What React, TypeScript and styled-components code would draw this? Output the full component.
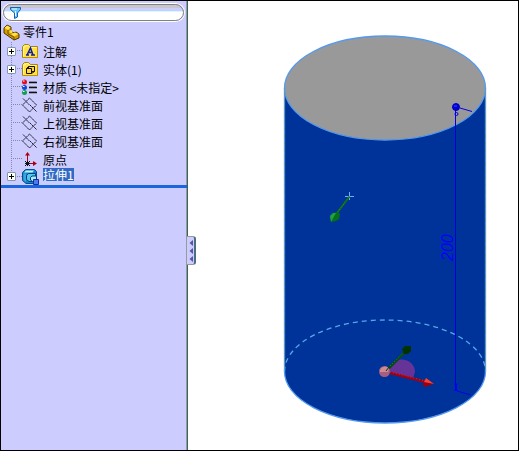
import React, { useState } from 'react';
import styled, { createGlobalStyle } from 'styled-components';

const GlobalStyle = createGlobalStyle`
  *, *::before, *::after { box-sizing: border-box; }
  body { margin: 0; background: #fff; }
  button, input { font: inherit; }
`;

const Frame = styled.main`
  display: flex;
  min-height: 100vh;
  border: 1px solid #000;
  background: #fff;
  color: #000;
  font: 12px/18px 'Noto Sans CJK SC', sans-serif;
`;

const Sidebar = styled.aside`
  position: relative;
  flex: 0 0 187px;
  background: #ccccff;
  border-right: 1px solid #336666;
  box-shadow: inset -1px 0 #999999;
`;

const FilterBar = styled.label`
  display: flex;
  align-items: center;
  gap: 4px;
  height: 17px;
  margin: 3px 3px 1px 2px;
  padding: 0 6px;
  border: 1px solid #808080;
  border-radius: 9px;
  box-shadow: 0 0 0 1px #fff;
  background: linear-gradient(#c8c8cc 3px, #ccccff 3px 6px, #ccffff 6px 7px, #fff 7px);
`;

const FilterInput = styled.input`
  flex: 1;
  min-width: 0;
  height: 14px;
  padding: 0;
  border: 0;
  outline: 0;
  background: transparent;
  font-size: 12px;
`;

const Root = styled.div`
  display: flex;
  align-items: center;
  gap: 3px;
  height: 20px;
  padding-left: 2px;
`;

const Tree = styled.ul`
  list-style: none;
  margin: 0;
  padding: 0 1px 0 0;
  border-bottom: 3px solid #1a66dd;
`;

const Row = styled.li`
  display: flex;
  align-items: center;
  height: 18px;

  &:last-child {
    height: 17px;
    align-items: flex-end;
  }
`;

const Branch = styled.span<{ $last: boolean }>`
  display: flex;
  align-items: center;
  align-self: stretch;
  width: 11px;
  margin-left: 10px;
  background-image:
    repeating-linear-gradient(#8888a0 0 1px, transparent 1px 2px),
    repeating-linear-gradient(90deg, #8888a0 0 1px, transparent 1px 2px);
  background-repeat: no-repeat;
  background-size: 1px ${(p) => (p.$last ? '50%' : '100%')}, 100% 1px;
  background-position: 0 0, 0 8px;
`;

const Toggle = styled.button`
  display: flex;
  flex: none;
  width: 9px;
  height: 9px;
  margin-left: -4px;
  padding: 0;
  border: 1px solid #7f99b5;
  border-radius: 1px;
  background: #fffff4;
`;

const Label = styled.span<{ $selected?: boolean }>`
  margin-left: 4px;
  line-height: 13px;
  white-space: nowrap;
  color: ${(p) => (p.$selected ? '#fff' : '#000')};
  background: ${(p) => (p.$selected ? '#316ac5' : 'transparent')};
  align-self: ${(p) => (p.$selected ? 'flex-start' : 'center')};
`;

const Icon = styled.svg`
  display: block;
  flex: none;
`;

const Collapse = styled.button`
  position: absolute;
  top: 235px;
  right: -9px;
  display: flex;
  width: 9px;
  height: 29px;
  padding: 0;
  border: 1px solid #999;
  border-left: 0;
  border-right: 2px solid #4a7080;
  border-radius: 0 3px 3px 0;
  background: #ccccff;
`;

const Viewport = styled.section`
  flex: 1;
  min-width: 0;
  display: flex;
`;

const Scene = styled.svg`
  display: block;
  width: 100%;
  height: calc(100vh - 2px);
`;

const Dimension = styled.text`
  font: italic 16px 'Liberation Sans', sans-serif;
  fill: #0000ff;
`;

type Kind = 'note' | 'body' | 'material' | 'plane' | 'origin' | 'extrude';

const Folder = () => (
  <>
    <path d="M.5 14.500V3.500L2.500 1.500H6.500L8.500 3.500H15.500V14.500Z" fill="#ffe24a" stroke="#a88410" />
    <path d="M1.500 13.500V4H3L4 2.500H6L8 4.500H14.500" fill="none" stroke="#fff6a8" />
    <path d="M1 14.500H15.500V4" fill="none" stroke="#c09000" />
  </>
);

const drawings: Record<Kind, React.ReactNode> = {
  note: (
    <>
      <Folder />
      <path d="M4 12H7M9 12H13M5 12L8.500 5L11 12M6.500 9.500H10" fill="none" stroke="#1020a0" strokeWidth="1.500" />
    </>
  ),
  body: (
    <>
      <Folder />
      <path d="M6.500 5.500H12.500V10.500H6.500Z" fill="#ffd838" stroke="#181000" />
      <path d="M4.500 7.500H9.500V12.500H4.500Z" fill="#ffd838" stroke="#181000" />
      <path d="M4.500 7.500L6.500 5.500M9.500 12.500L12.500 10.500" fill="none" stroke="#181000" />
    </>
  ),
  material: (
    <>
      <circle cx="2.500" cy="3" r="2.500" fill="#e01020" />
      <circle cx="2.500" cy="8.500" r="2.500" fill="#1048d8" />
      <circle cx="2.500" cy="13.500" r="2.500" fill="#10a050" />
      <path d="M1 2H2.500M1 7.500H2.500M1 12.500H2.500" stroke="#fff" />
      <path d="M7 3.500H15M7 8.500H15M7 13.500H15" stroke="#101010" strokeWidth="1.500" />
      <path d="M7 2.500H14M7 7.500H14M7 12.500H14" stroke="#888898" />
    </>
  ),
  plane: (
    <path d="M7.500 1L.5 8L7.500 15L14.500 8ZM1 1.500L7.500 8M8 8L14.500 14.500" fill="none" stroke="#202030" strokeDasharray="2 .4" />
  ),
  origin: (
    <>
      <path d="M5.500 11V4M7 12.500H12" stroke="#b00010" fill="none" />
      <path d="M3 4.500L5.500 1L8 4.500ZM11 10L15 12.500L11 15Z" fill="#b00010" />
      <path d="M3 10L8 15M8 10L3 15M5.500 10V15M3 12.500H8" stroke="#101010" />
    </>
  ),
  extrude: (
    <>
      <path d="M.5 3.500L3.500 .5H12.500L14.500 2.500V11L12 14.500H4L.5 11.500Z" fill="#1685c8" stroke="#064e9b" />
      <path d="M2 3.500L4 1.500H12L10.500 3.500Z" fill="#b8f4ff" />
      <path d="M1.500 4.500H4V13L1.500 11Z" fill="#3ba6dc" />
      <path d="M4.500 6.500L6.500 4.500H13.500V12.500H7L4.500 10.500Z" fill="#54c5ec" stroke="#004580" />
      <path d="M8.500 8.500L10 7H14.500V12.500H10.500L8.500 11Z" fill="#a5eaff" stroke="#003a75" />
      <path d="M11.500 10.500H16.500V15.500H11.500Z" fill="#5278ed" stroke="#10309d" />
    </>
  ),
};

interface Item {
  kind: Kind;
  text: string;
  expandable?: boolean;
}

const items: Item[] = [
  { kind: 'note', text: '注解', expandable: true },
  { kind: 'body', text: '实体(1)', expandable: true },
  { kind: 'material', text: '材质 <未指定>' },
  { kind: 'plane', text: '前视基准面' },
  { kind: 'plane', text: '上视基准面' },
  { kind: 'plane', text: '右视基准面' },
  { kind: 'origin', text: '原点' },
  { kind: 'extrude', text: '拉伸1', expandable: true },
];

const Cylinder = () => (
  <Scene viewBox="188 1 330 449" role="img" aria-label="拉伸1">
    <path d="M284.500 88V371.500A100.500 51.500 0 0 0 485.500 371.500V88Z" fill="#003399" />
    <ellipse cx="385" cy="88" rx="100.500" ry="52" fill="#999999" stroke="#5599ee" strokeWidth="1.300" />
    <path d="M284.500 88V371.500A100.500 51.500 0 0 0 485.500 371.500V88" fill="none" stroke="#5599ee" strokeWidth="1.300" />
    <path d="M284.500 92V372M485.500 92V372" stroke="#669999" strokeDasharray="4 3" />
    <path d="M284.500 371.500A100.500 51.500 0 0 1 485.500 371.500" fill="none" stroke="#55a8e8" strokeWidth="1.300" strokeDasharray="5 4" />

    <g stroke="#0000ee" fill="none">
      <path d="M455.500 108V391" stroke="#0000dd" shapeRendering="crispEdges" />
      <path d="M460 108L472 111.500M457 391L471 395" />
      <path d="M454 384H458M456.500 384V390M454 390.500H458" stroke="#0000ff" />
      <circle cx="456.500" cy="114" r="1.500" />
      <circle cx="456" cy="107" r="3.500" fill="#0000dd" stroke="#0000bb" />
      <path d="M454 106H457" stroke="#4444ff" />
    </g>
    <Dimension transform="translate(453 261) rotate(-90)">200</Dimension>

    <path d="M349.500 192V200M345 196.500H354" stroke="#77aaff" />
    <path d="M349.500 196.500L337 213" stroke="#087018" strokeWidth="2" />
    <path d="M349 197L337 213" stroke="#22a030" strokeDasharray="1 2" />
    <path d="M330 216L333 213L337 212L340 214L339 219L336 221L331 222Z" fill="#067018" />
    <path d="M330 216L333 213L336 213L331 222Z" fill="#20a044" />

    <path d="M388 370L398 360C407 358 415 364 415 372L413 378L390 373Z" fill="#663399" />
    <path d="M388 369L404 353" stroke="#064c18" strokeWidth="2.500" />
    <path d="M388 368L403 353" stroke="#3a8040" strokeDasharray="1 2" />
    <path d="M402 349L405 346H411V351L408 354H404Z" fill="#003300" />
    <circle cx="384.500" cy="371.500" r="5.500" fill="#a65d80" />
    <path d="M380 370A5 5 0 0 1 389 369L388 372H380Z" fill="#cc8b91" />
    <path d="M386 371L389 367" stroke="#033018" />
    <path d="M390 373L426 382" stroke="#a00010" strokeWidth="2.500" />
    <path d="M390 372L426 381" stroke="#e02030" strokeDasharray="1 2" />
    <path d="M426 378L434 384L424 387L423 384Z" fill="#9b0008" />
    <path d="M426 378L434 384L424 382Z" fill="#ef4545" />
  </Scene>
);

export default function App() {
  const [selected, setSelected] = useState(items.length - 1);
  const [filter, setFilter] = useState('');

  return (
    <>
      <GlobalStyle />
      <Frame>
        <Sidebar>
          <FilterBar>
            <Icon width="11" height="12" viewBox="0 0 11 12" aria-hidden="true">
              <path d="M.5 .5H10.500V2.500L7.500 6V10L4.500 11.500V6L.5 2.500Z" fill="#6cc5f4" stroke="#1460b8" />
              <path d="M2 2H7M5.500 4V9" stroke="#e6ffff" />
            </Icon>
            <FilterInput aria-label="过滤" value={filter} onChange={(e) => setFilter(e.target.value)} />
          </FilterBar>
          <Root>
            <Icon width="17" height="17" viewBox="0 0 17 17" aria-hidden="true">
              <path d="M1 4L4 1L8 3V7L11 9L13 8L16 10V14L11 16L1 9Z" fill="#d89c00" stroke="#4b3400" />
              <path d="M1.500 4L4 1.500L7.500 3.500L5 6ZM8 10L12 8.500L15.500 10L11 12.500Z" fill="#ffe34a" />
              <path d="M5 6V10L11 13V16" fill="none" stroke="#705000" />
              <circle cx="8" cy="7.500" r="1.500" fill="#ffe34a" />
            </Icon>
            <span>零件1</span>
          </Root>
          <Tree>
            {items.map((item, index) => (
              <Row key={item.text} onClick={() => setSelected(index)}>
                <Branch $last={index === items.length - 1}>
                  {item.expandable && (
                    <Toggle type="button" aria-label={`展开 ${item.text}`}>
                      <Icon width="7" height="7" viewBox="0 0 7 7" aria-hidden="true">
                        <path d="M1 3.500H6M3.500 1V6" stroke="#000" />
                      </Icon>
                    </Toggle>
                  )}
                </Branch>
                <Icon width="17" height="16" viewBox="0 0 17 16" aria-hidden="true">
                  {drawings[item.kind]}
                </Icon>
                <Label $selected={selected === index}>{item.text}</Label>
              </Row>
            ))}
          </Tree>
          <Collapse type="button" aria-label="折叠面板">
            <Icon width="7" height="27" viewBox="0 0 7 27" aria-hidden="true">
              <path d="M6 3V9L2.500 6ZM6 11V17L2.500 14ZM6 19V25L2.500 22Z" fill="#5555aa" />
            </Icon>
          </Collapse>
        </Sidebar>
        <Viewport>
          <Cylinder />
        </Viewport>
      </Frame>
    </>
  );
}
